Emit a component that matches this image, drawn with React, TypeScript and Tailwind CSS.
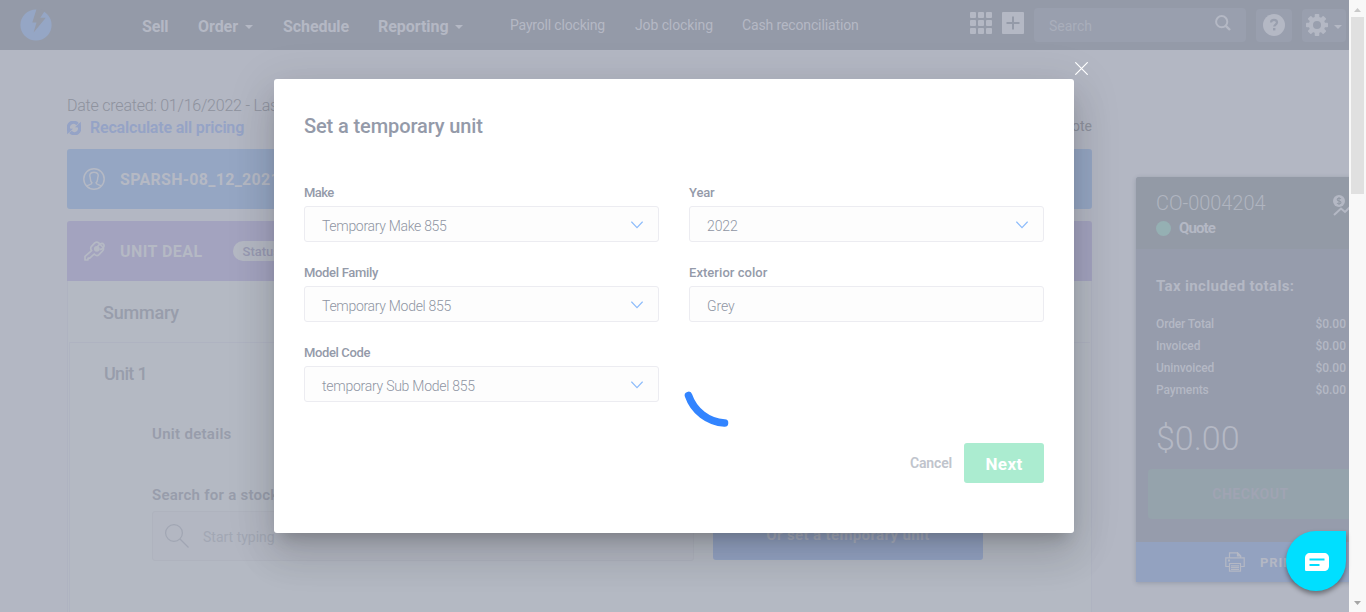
import type { ReactNode } from "react";

function Caret({ className = "" }: { className?: string }) {
  return (
    <svg className={className} width="8" height="4" viewBox="0 0 8 4">
      <path d="M0 0h8L4 4z" fill="currentColor" />
    </svg>
  );
}

function Logo() {
  return (
    <svg className="mt-[9px] ml-5 shrink-0" width="32" height="32" viewBox="0 0 32 32">
      <circle cx="16" cy="16" r="15.6" fill="#95a6c5" />
      <path d="M16.7 -0.5L12.3 13.5H16.5L13.6 23.5L25.8 8.7H20.3L25 1.5z" fill="#949aa8" />
    </svg>
  );
}

function Header() {
  return (
    <header className="flex h-[50px] shrink-0 bg-[#949aa8] text-[#b4b8c4]">
      <Logo />
      <nav className="mt-[17px] ml-[90px] flex h-5 items-center text-base/5 font-bold whitespace-nowrap">
        <span className="w-14 tracking-[-0.12px]">Sell</span>
        <span className="flex w-[85px] items-center tracking-[-0.05px]">
          Order
          <Caret className="ml-[7px]" />
        </span>
        <span className="w-[95px] tracking-[-0.08px]">Schedule</span>
        <span className="flex w-[132px] items-center tracking-[-0.05px]">
          Reporting
          <Caret className="ml-[7px]" />
        </span>
      </nav>
      <nav className="mt-[15px] flex h-5 text-sm/5 whitespace-nowrap">
        <span className="w-[125px] tracking-[-0.18px]">Payroll clocking</span>
        <span className="w-[107px] tracking-[-0.1px]">Job clocking</span>
        <span className="w-[228px] tracking-[-0.13px]">Cash reconciliation</span>
      </nav>
      <svg className="mt-3 shrink-0" width="22" height="22" viewBox="0 0 22 22" fill="currentColor">
        {[0, 8, 16].map((y) =>
          [0, 8, 16].map((x) => <rect key={`${x}-${y}`} x={x} y={y} width="6" height="6" rx="1" />),
        )}
      </svg>
      <svg className="mt-3 ml-[10px] shrink-0" width="22" height="22" viewBox="0 0 22 22">
        <rect width="22" height="22" rx="1" fill="currentColor" />
        <path d="M11 4.5v13M4.5 11h13" stroke="#949aa8" strokeWidth="2" />
      </svg>
      <div className="mt-2 ml-[10px] flex h-[34px] w-[212px] shrink-0 justify-between rounded bg-[#999fae] pr-[15px] pl-[15px]">
        <span className="mt-2 text-sm/5 text-[#a9aebb]">Search</span>
        <svg className="mt-[7px]" width="16" height="16" viewBox="0 0 16 16" fill="none" stroke="currentColor">
          <circle cx="6.7" cy="6.7" r="5.6" strokeWidth="2" />
          <path d="M10.8 10.8L15 15" strokeWidth="2.4" />
        </svg>
      </div>
      <div className="mt-[9px] ml-[10px] flex h-[33px] w-9 shrink-0 justify-center rounded bg-[#999fae] pt-[5px]">
        <svg width="22" height="22" viewBox="0 0 22 22">
          <circle cx="11" cy="11" r="11" fill="currentColor" />
          <path d="M8 8.6C8 6.8 9.300 5.800 11 5.800s3 1 3 2.600c0 2.200-2.800 2.100-2.800 4.200" fill="none" stroke="#999fae" strokeWidth="2.200" />
          <rect x="10" y="14" width="2.400" height="2.400" fill="#999fae" />
        </svg>
      </div>
      <div className="mt-[9px] ml-[10px] flex h-[33px] w-11 shrink-0 rounded bg-[#999fae] pl-1">
        <svg className="mt-[5px]" width="22" height="22" viewBox="-11 -11 22 22">
          <g fill="currentColor">
            {[0, 45, 90, 135].map((a) => (
              <rect key={a} x="-2.3" y="-11" width="4.600" height="22" rx="0.8" transform={`rotate(${a})`} />
            ))}
            <circle r="8.300" />
          </g>
          <circle r="4" fill="#999fae" />
        </svg>
        <Caret className="mt-4 ml-[6px]" />
      </div>
    </header>
  );
}

function QuoteBody() {
  return (
    <section className="ml-[67px] flex w-[1025px] shrink-0 flex-col text-[#989dab]">
      <div className="mt-[46px] flex h-5 justify-between">
        <span className="text-base/5 font-light tracking-[-0.22px] text-[#8e929e]">Date created: 01/16/2022 - Last</span>
      </div>
      <div className="mt-[2px] flex h-5 items-center justify-between">
        <span className="flex items-center text-[#95a3c6]">
          <svg width="14" height="14" viewBox="0 0 14 14" fill="none" stroke="currentColor" strokeWidth="3.400">
            <path d="M2 9A5.200 5.200 0 0 1 10.500 3.100M12 5A5.200 5.200 0 0 1 3.500 10.900" />
            <path d="M8 6.200L14 6.500L13.800 0.800zM6 7.800L0 7.500L0.200 13.200z" fill="currentColor" stroke="none" />
          </svg>
          <span className="ml-[9px] text-base/5 font-semibold tracking-[-0.18px]">Recalculate all pricing</span>
        </span>
        <span className="-mt-1 text-sm/5 font-normal text-[#8e929e]">Delete Quote</span>
      </div>
      <div className="mt-[11px] flex h-[60px] items-center rounded-[3px] bg-[#95a6c3] pl-4 text-[#b5b9c4]">
        <svg width="22" height="22" viewBox="0 0 22 22" fill="none" stroke="currentColor" strokeWidth="1.500">
          <circle cx="11" cy="11" r="10.200" />
          <path d="M3.500 18.200C5 16.600 9 17 9 14.800C7.200 13.500 7.500 11.500 7.200 9.500C6.800 8.500 6.500 7.500 7 6.300C7.700 4.700 9 4.300 11 4.300s3.300.4 4 2c.5 1.200.2 2.200-.2 3.200c-.3 2 0 4-1.800 5.300c0 2.200 4 1.800 5.500 3.400" />
        </svg>
        <span className="mt-0.5 ml-[15px] text-base/5 font-bold tracking-[0.29px]">SPARSH-08_12_2021</span>
      </div>
      <div className="mt-3 flex h-[60px] shrink-0 items-center rounded-t-[3px] bg-[#a3a3bf] pl-[17px] text-[#b5b9c4]">
        <svg width="21" height="20" viewBox="0 0 21 20" fill="none" stroke="currentColor" strokeWidth="1.700" strokeLinejoin="round">
          <path d="M10.800 1.900C12 0.900 13.500 0.900 14.700 1.900L18.700 6C19.700 7.200 19.700 8.600 18.700 9.700L15 13.600C13.800 14.700 12 14.600 10.800 13.600L10.200 13L5.800 17.200L4.200 17L3.800 19H1V15.400L7.600 9.600C6.600 8.200 6.500 6.500 7.500 5.300z" />
          <circle cx="12.800" cy="7.800" r="2" fill="currentColor" />
          <path d="M13 7C14 3.500 18 1 19.700 3.400C21 6 18.500 8.400 15.500 8.600" />
        </svg>
        <span className="mt-0.5 ml-[15px] text-base/5 font-bold tracking-[0.44px]">UNIT DEAL</span>
        <span className="ml-[30px] flex h-5 w-[90px] items-center rounded-full bg-[#b4b8c3] pt-px pl-[10px] text-[13px]/5 font-medium text-[#9799b2]">
          Status
        </span>
      </div>
      <div className="flex grow flex-col border-x border-[#afb3c1] bg-[#b4b9c3]">
        <div className="flex h-[61px] shrink-0 items-center pt-px pl-[35px] text-[18px] font-medium tracking-[-0.19px]">Summary</div>
        <div className="mx-px grow border-t border-l border-[#afb3c1] pl-[34px]">
          <div className="pt-[21px] text-[18px]/5 font-medium tracking-[-0.68px]">Unit 1</div>
          <div className="pt-10 pl-[48px] text-[15px]/5 font-semibold tracking-[0.3px]">Unit details</div>
          <div className="pt-[41px] pl-[48px] text-[15px]/5 font-semibold tracking-[0.25px]">Search for a stock unit</div>
          <div className="mt-[6px] ml-12 flex">
            <div className="flex h-[50px] w-[542px] items-center rounded-[3px] border border-[#afb3be] bg-[#b3b7c2] pl-3">
              <svg width="24" height="24" viewBox="0 0 24 24" fill="none" stroke="#a1a6b3" strokeWidth="1.200">
                <circle cx="9" cy="9" r="8.400" />
                <path d="M15 15L23.500 23.500" />
              </svg>
              <span className="mt-0.5 ml-[14px] text-sm/5 text-[#a2a7b4]">Start typing</span>
            </div>
            <div className="-mt-px ml-[19px] flex h-[50px] w-[270px] items-center justify-center rounded-[3px] bg-[#94a3c3] text-[15px]/5 font-bold tracking-[0.37px] text-[#adb3c3]">
              Or set a temporary unit
            </div>
          </div>
        </div>
      </div>
    </section>
  );
}

function TotalRow({ label }: { label: string }) {
  return (
    <div className="flex h-[22px] items-center justify-between tracking-[-0.12px]">
      <span>{label}</span>
      <span className="tracking-normal">$0.00</span>
    </div>
  );
}

function SidePanel() {
  return (
    <aside className="mt-[127px] ml-11 h-[405px] w-[229px] shrink-0 rounded-t-[3px] bg-[#969cac] text-[#b4b8c4] shadow-[0_1px_4px_rgba(60,70,90,0.25)]">
      <div className="flex h-[72px] justify-between rounded-t-[3px] bg-[#939aa6] pl-5">
        <div>
          <div className="mt-[14px] text-[20px]/6 font-light tracking-[-0.04px] text-[#b0b5c0]">CO-0004204</div>
          <div className="mt-[3px] flex items-center">
            <span className="size-[15px] rounded-full bg-[#95b0b3]" />
            <span className="ml-2 text-[15px]/5 font-bold tracking-[-0.9px]">Quote</span>
          </div>
        </div>
        <svg className="mt-[17px] mr-[12px]" width="20" height="22" viewBox="0 0 20 22" fill="none">
          <circle cx="6" cy="7" r="6" fill="currentColor" />
          <path d="M8 5C7 3.800 4.200 4 4.200 5.500C4.200 7.300 8 6.600 8 8.500C8 10 5 10.200 4 9M6 3v8" stroke="#939aa6" strokeWidth="1.100" />
          <path d="M1 21L8 14.500L12 18L19 11" stroke="currentColor" strokeWidth="2" />
        </svg>
      </div>
      <div className="h-[293px]">
        <div className="pt-[27px] pl-5 text-[15px]/5 font-bold tracking-[0.36px]">Tax included totals:</div>
        <div className="mt-[17px] pr-[19px] pl-5 text-xs font-medium">
          <TotalRow label="Order Total" />
          <TotalRow label="Invoiced" />
          <TotalRow label="Uninvoiced" />
          <TotalRow label="Payments" />
        </div>
        <div className="mt-[17px] pl-5 text-[34px]/[40px] font-light">$0.00</div>
        <div className="mx-3 mt-[11px] flex h-[50px] items-center justify-center rounded bg-[#95a3ac] text-sm font-bold tracking-[0.52px] text-[#a0a4b3]">
          CHECKOUT
        </div>
      </div>
      <div className="flex h-10 items-center bg-[#93a2c0] pl-[89px]">
        <svg width="20" height="20" viewBox="0 0 20 20" fill="none" stroke="currentColor" strokeWidth="1.200">
          <path d="M4.500 5.500V0.800H12.500L15.500 3.800V5.500M4.500 14.500H0.800V5.800H19.200V14.500H15.500" />
          <path d="M12.500 0.800V3.800H15.500z" fill="currentColor" />
          <path d="M4.500 11.500H15.500V19.200H4.500zM6 13.800h8M6 15.500h8M6 17.300h8" />
          <path d="M3 8.500h2" strokeWidth="1.800" />
        </svg>
        <span className="mt-0.5 ml-[15px] text-[13px] font-bold tracking-[0.9px]">PRINT</span>
      </div>
    </aside>
  );
}

function Field({ label, value, select = true, labelClass = "", valueClass = "" }: { label: string; value: string; select?: boolean; labelClass?: string; valueClass?: string }) {
  return (
    <label className="block h-20">
      <span className={`block h-[22px] pt-px text-[13px]/4 font-medium text-[#949aa9] ${labelClass}`}>{label}</span>
      <span className="flex h-9 items-center justify-between rounded-[3px] border border-[#ececf1] bg-[#fdfdfd] pr-[15px] pl-[17px]">
        <span className={`pt-[3px] text-sm/5 font-light text-[#8f95a3] ${valueClass}`}>{value}</span>
        {select && (
          <svg className="mt-0.5" width="12" height="8" viewBox="0 0 12 8" fill="none" stroke="#8dbcfb" strokeWidth="1.200">
            <path d="M0.400 0.700L6 6.700L11.600 0.700" />
          </svg>
        )}
      </span>
    </label>
  );
}

function Modal({ children }: { children: ReactNode }) {
  return (
    <div className="absolute top-[79px] left-[274px] h-[454px] w-[800px] rounded-[3px] bg-white px-[30px] shadow-[0_11px_15px_-7px_rgba(0,0,0,0.2),0_24px_38px_3px_rgba(0,0,0,0.09),0_9px_46px_8px_rgba(0,0,0,0.08)]">
      {children}
      <svg className="absolute top-[-17px] right-[-14px]" width="13" height="13" viewBox="0 0 13 13" stroke="#fff" strokeWidth="1.200">
        <path d="M0.300 0.300L12.700 12.700M12.700 0.300L0.300 12.700" />
      </svg>
      <svg className="absolute top-[258px] left-[406px]" width="94" height="94" viewBox="0 0 94 94" fill="none">
        <path d="M8.500 58.500A40.700 40.700 0 0 0 44.500 86" stroke="#3284ff" strokeWidth="7.600" strokeLinecap="round" />
      </svg>
    </div>
  );
}

function Scrollbar() {
  return (
    <div className="flex h-full w-[17px] shrink-0 flex-col items-center justify-between bg-[#f8f8f8] pt-2 pb-[7px]">
      <div className="flex flex-col items-center">
        <svg width="7" height="4" viewBox="0 0 7 4">
          <path d="M0 4h7L3.500 0z" fill="#c9c9c9" />
        </svg>
        <div className="mt-[5px] h-[177px] w-[13px] bg-[#e0e0e0]" />
      </div>
      <svg width="7" height="4" viewBox="0 0 7 4">
        <path d="M0 0h7L3.500 4z" fill="#a6a6a6" />
      </svg>
    </div>
  );
}

function ChatBubble() {
  return (
    <div className="absolute top-[531px] left-[1286px] flex size-[60px] items-center justify-center rounded-full rounded-tr-[5px] bg-[#00dfff] pt-[2px] pl-0.5 shadow-[0_3px_5px_rgba(0,0,0,0.4)]">
      <svg width="24" height="18" viewBox="0 0 24 18">
        <path d="M5 0H19C22 0 24 2 24 5V13C24 16 22 18 19 18H1.500C.5 18 0 17.500 0 16.500V5C0 2 2 0 5 0z" fill="#fff" />
        <path d="M4.500 6.500h15M4.500 12h10" stroke="#00dfff" strokeWidth="1.800" />
      </svg>
    </div>
  );
}

export default function App() {
  return (
    <div className="relative flex h-[612px] w-[1366px] overflow-hidden font-[Roboto,sans-serif]">
      <div className="flex h-full w-[1349px] flex-col overflow-hidden bg-[#b3b7c3]">
        <Header />
        <main className="flex min-h-0 grow">
          <QuoteBody />
          <SidePanel />
        </main>
      </div>
      <Modal>
        <h2 className="pt-[35px] text-[20px]/6 font-medium tracking-[-0.11px] text-[#949aa9]">Set a temporary unit</h2>
        <div className="mt-[46px] grid grid-cols-2 gap-x-[30px]">
          <Field label="Make" value="Temporary Make 855" labelClass="tracking-[-0.6px]" valueClass="tracking-[-0.31px]" />
          <Field label="Year" value="2022" labelClass="tracking-[-0.15px]" valueClass="tracking-[-0.14px]" />
          <Field label="Model Family" value="Temporary Model 855" labelClass="tracking-[-0.32px]" valueClass="tracking-[-0.3px]" />
          <Field label="Exterior color" value="Grey" select={false} labelClass="tracking-[0.05px]" valueClass="tracking-[-0.12px]" />
          <Field label="Model Code" value="temporary Sub Model 855" labelClass="tracking-[-0.37px]" valueClass="tracking-[-0.25px]" />
        </div>
        <div className="mt-[19px] flex h-10 items-center justify-end">
          <span className="text-sm/5 font-semibold tracking-[-0.16px] text-[#c0c4cc]">Cancel</span>
          <span className="ml-3 flex h-10 w-20 items-center justify-center rounded-[3px] bg-[#abecd0] pt-[3px] text-[17px] font-bold tracking-[0.4px] text-white">Next</span>
        </div>
      </Modal>
      <ChatBubble />
      <Scrollbar />
    </div>
  );
}
